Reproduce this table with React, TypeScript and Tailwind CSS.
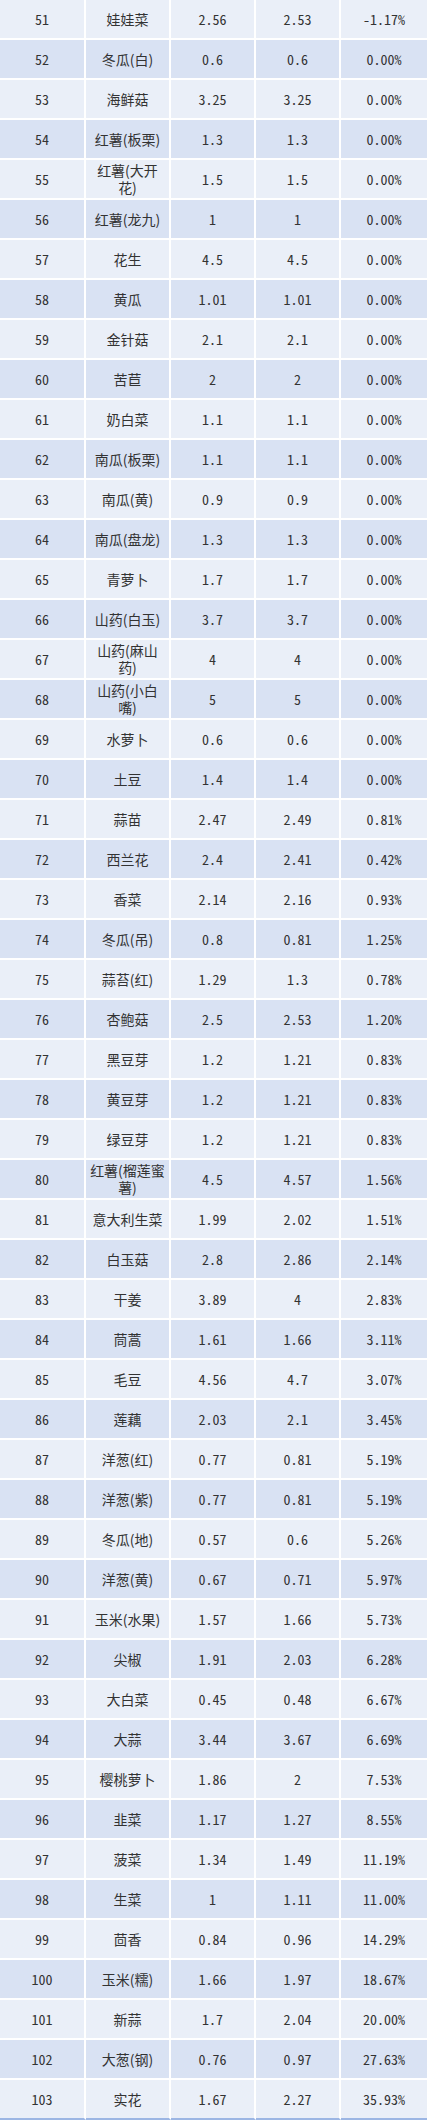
import React from "react";

type Row = [number, string, string, string, string];

const rows: Row[] = [
  [51, "娃娃菜", "2.56", "2.53", "-1.17%"],
  [52, "冬瓜(白)", "0.6", "0.6", "0.00%"],
  [53, "海鲜菇", "3.25", "3.25", "0.00%"],
  [54, "红薯(板栗)", "1.3", "1.3", "0.00%"],
  [55, "红薯(大开花)", "1.5", "1.5", "0.00%"],
  [56, "红薯(龙九)", "1", "1", "0.00%"],
  [57, "花生", "4.5", "4.5", "0.00%"],
  [58, "黄瓜", "1.01", "1.01", "0.00%"],
  [59, "金针菇", "2.1", "2.1", "0.00%"],
  [60, "苦苣", "2", "2", "0.00%"],
  [61, "奶白菜", "1.1", "1.1", "0.00%"],
  [62, "南瓜(板栗)", "1.1", "1.1", "0.00%"],
  [63, "南瓜(黄)", "0.9", "0.9", "0.00%"],
  [64, "南瓜(盘龙)", "1.3", "1.3", "0.00%"],
  [65, "青萝卜", "1.7", "1.7", "0.00%"],
  [66, "山药(白玉)", "3.7", "3.7", "0.00%"],
  [67, "山药(麻山药)", "4", "4", "0.00%"],
  [68, "山药(小白嘴)", "5", "5", "0.00%"],
  [69, "水萝卜", "0.6", "0.6", "0.00%"],
  [70, "土豆", "1.4", "1.4", "0.00%"],
  [71, "蒜苗", "2.47", "2.49", "0.81%"],
  [72, "西兰花", "2.4", "2.41", "0.42%"],
  [73, "香菜", "2.14", "2.16", "0.93%"],
  [74, "冬瓜(吊)", "0.8", "0.81", "1.25%"],
  [75, "蒜苔(红)", "1.29", "1.3", "0.78%"],
  [76, "杏鲍菇", "2.5", "2.53", "1.20%"],
  [77, "黑豆芽", "1.2", "1.21", "0.83%"],
  [78, "黄豆芽", "1.2", "1.21", "0.83%"],
  [79, "绿豆芽", "1.2", "1.21", "0.83%"],
  [80, "红薯(榴莲蜜薯)", "4.5", "4.57", "1.56%"],
  [81, "意大利生菜", "1.99", "2.02", "1.51%"],
  [82, "白玉菇", "2.8", "2.86", "2.14%"],
  [83, "干姜", "3.89", "4", "2.83%"],
  [84, "茼蒿", "1.61", "1.66", "3.11%"],
  [85, "毛豆", "4.56", "4.7", "3.07%"],
  [86, "莲藕", "2.03", "2.1", "3.45%"],
  [87, "洋葱(红)", "0.77", "0.81", "5.19%"],
  [88, "洋葱(紫)", "0.77", "0.81", "5.19%"],
  [89, "冬瓜(地)", "0.57", "0.6", "5.26%"],
  [90, "洋葱(黄)", "0.67", "0.71", "5.97%"],
  [91, "玉米(水果)", "1.57", "1.66", "5.73%"],
  [92, "尖椒", "1.91", "2.03", "6.28%"],
  [93, "大白菜", "0.45", "0.48", "6.67%"],
  [94, "大蒜", "3.44", "3.67", "6.69%"],
  [95, "樱桃萝卜", "1.86", "2", "7.53%"],
  [96, "韭菜", "1.17", "1.27", "8.55%"],
  [97, "菠菜", "1.34", "1.49", "11.19%"],
  [98, "生菜", "1", "1.11", "11.00%"],
  [99, "茴香", "0.84", "0.96", "14.29%"],
  [100, "玉米(糯)", "1.66", "1.97", "18.67%"],
  [101, "新蒜", "1.7", "2.04", "20.00%"],
  [102, "大葱(钢)", "0.76", "0.97", "27.63%"],
  [103, "实花", "1.67", "2.27", "35.93%"],
];

const mono =
  "font-['Noto_Sans_Mono_CJK_SC','DejaVu_Sans_Mono','Liberation_Mono',monospace]";

export default function App() {
  return (
    <div className="w-[427px] bg-white font-['Noto_Sans_CJK_SC','Noto_Sans',sans-serif] text-[14px] text-[#333333]">
      {rows.map((r, i) => {
        const last = i === rows.length - 1;
        const bg = r[0] % 2 === 0 ? "bg-[#d9e2f3]" : "bg-[#eaeff8]";
        const bb = last ? "border-b-[#9cb6e4]" : "border-b-white";
        const cell = `flex h-[40px] items-center justify-center border-b-2 text-center ${bg} ${bb}`;
        return (
          <div key={r[0]} className="flex">
            <div className={`${cell} ${mono} w-[86px] border-r-2 border-r-white`}>
              {r[0]}
            </div>
            <div className={`${cell} w-[85px] border-r-2 border-r-white px-[4px] leading-[17px]`}>
              {r[1]}
            </div>
            <div className={`${cell} ${mono} w-[85px] border-r-2 border-r-white`}>
              {r[2]}
            </div>
            <div className={`${cell} ${mono} w-[85px] border-r-2 border-r-white`}>
              {r[3]}
            </div>
            <div className={`${cell} ${mono} flex-1`}>{r[4]}</div>
          </div>
        );
      })}
    </div>
  );
}
